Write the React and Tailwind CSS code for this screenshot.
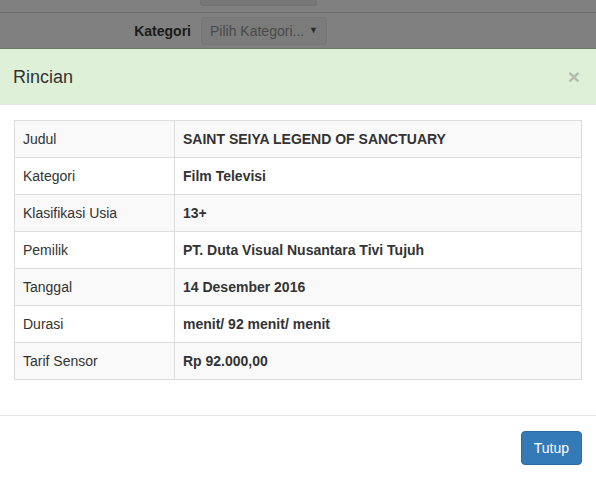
import React from "react"

const rows = [
  ["Judul", "SAINT SEIYA LEGEND OF SANCTUARY"],
  ["Kategori", "Film Televisi"],
  ["Klasifikasi Usia", "13+"],
  ["Pemilik", "PT. Duta Visual Nusantara Tivi Tujuh"],
  ["Tanggal", "14 Desember 2016"],
  ["Durasi", "menit/ 92 menit/ menit"],
  ["Tarif Sensor", "Rp 92.000,00"],
]

export default function App() {
  return (
    <div
      className="w-[596px] h-[478px] overflow-hidden bg-white text-[14px] text-[#333]"
      style={{ fontFamily: '"Liberation Sans", Arial, sans-serif' }}
    >
      {/* page behind the backdrop */}
      <div className="h-[48px] bg-[#808080] flex flex-col">
        <div className="h-[12px] flex">
          <div className="ml-[200px] w-[117px] h-[6px] bg-[#777] border-x border-b border-[#727272] rounded-b-[3px]" />
        </div>
        <div className="h-[36px] border-t border-[#6f6f6f] flex items-center">
          <span className="w-[191px] text-right font-bold text-[#1a1a1a] leading-5">Kategori</span>
          <div className="ml-[10px] w-[126px] h-[28px] bg-[#7b7b7b] border border-[#767676] rounded-[3px] flex items-center justify-between pl-[8px] pr-[8px]">
            <span className="text-[#4a4a4a] leading-5">Pilih Kategori...</span>
            <span className="text-[#2a2a2a] text-[9px]">▼</span>
          </div>
        </div>
      </div>

      {/* modal */}
      <div className="border-t border-[#6b7a66]">
        <div className="h-[56px] bg-[#dff0d8] border-b border-[#e5e5e5] flex items-center justify-between pl-[13px] pr-[16px]">
          <h4 className="text-[18px] leading-[26px] text-[#333]">Rincian</h4>
          <span className="text-[21px] font-bold leading-none text-[#b3bcae]">×</span>
        </div>

        <div className="pt-[15px] pb-[15px] px-[14px]">
          <table className="w-full border-collapse border border-[#ddd] mb-[20px]">
            <tbody>
              {rows.map(([label, value], i) => (
                <tr key={label} className={i % 2 === 0 ? "bg-[#f9f9f9]" : "bg-white"}>
                  <td className="w-[160px] border border-[#ddd] p-2 leading-5">{label}</td>
                  <td className="border border-[#ddd] p-2 leading-5 font-bold">{value}</td>
                </tr>
              ))}
            </tbody>
          </table>
        </div>

        <div className="border-t border-[#e5e5e5] p-[15px] pr-[14px] flex justify-end">
          <button className="h-[34px] px-3 bg-[#337ab7] border border-[#2e6da4] rounded-[4px] text-white leading-5">
            Tutup
          </button>
        </div>
      </div>
    </div>
  )
}
